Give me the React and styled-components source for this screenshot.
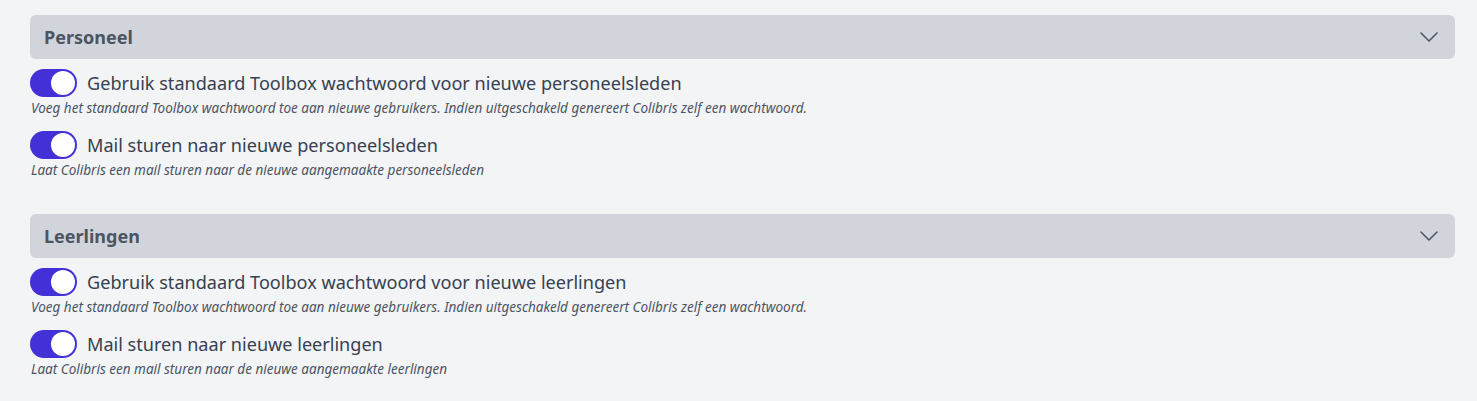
import React, { useState } from "react";
import styled, { createGlobalStyle } from "styled-components";

const Global = createGlobalStyle`
  html, body { margin: 0; padding: 0; background: #f3f4f6; }
  body { font-family: "Noto Sans", "Open Sans", sans-serif; }
  * { box-sizing: border-box; }
`;

const Page = styled.div`
  padding: 15px 22px 0 30px;
  display: flex;
  flex-direction: column;
  gap: 35px;
`;

const Section = styled.section`
  display: flex;
  flex-direction: column;
  gap: 10px;
`;

const Header = styled.button`
  all: unset;
  display: flex;
  align-items: center;
  justify-content: space-between;
  height: 44px;
  padding: 0 17px 0 14px;
  background: #d1d5db;
  border-radius: 6px;
  cursor: pointer;
`;

const Title = styled.h2`
  margin: 0;
  font-size: 18px;
  font-weight: 700;
  color: #4b5563;
  font-family: "Noto Sans", sans-serif;
`;

const Settings = styled.div`
  display: flex;
  flex-direction: column;
  gap: 14px;
`;

const Setting = styled.div`
  display: flex;
  flex-direction: column;
`;

const Row = styled.label`
  display: flex;
  align-items: center;
  gap: 10px;
  height: 28px;
  cursor: pointer;
`;

const Track = styled.span`
  position: relative;
  display: inline-block;
  width: 47px;
  height: 28px;
  border-radius: 14px;
  background: ${(p) => (p.$on ? "#4330d6" : "#9ca3af")};
  flex-shrink: 0;
`;

const Knob = styled.span`
  position: absolute;
  top: 2px;
  left: ${(p) => (p.$on ? "21px" : "2px")};
  width: 24px;
  height: 24px;
  border-radius: 50%;
  background: #ffffff;
  transition: left 0.15s;
`;

const Label = styled.span`
  font-size: 18.1px;
  color: #374151;
  line-height: 28px;
`;

const Description = styled.p`
  margin: 2px 0 0 1px;
  font-size: 13.5px;
  line-height: 18px;
  font-style: italic;
  color: #4b5563;
`;

const Chevron = () => (
  <svg width="18" height="10" viewBox="0 0 18 10" fill="none">
    <polyline points="1,1 9,9 17,1" stroke="#4b5563" strokeWidth="1.6" strokeLinecap="round" strokeLinejoin="round" />
  </svg>
);

const Toggle = ({ on, onClick }) => (
  <Track $on={on} onClick={onClick}>
    <Knob $on={on} />
  </Track>
);

const SettingItem = ({ label, description }) => {
  const [on, setOn] = useState(true);
  return (
    <Setting>
      <Row onClick={() => setOn(!on)}>
        <Toggle on={on} />
        <Label>{label}</Label>
      </Row>
      <Description>{description}</Description>
    </Setting>
  );
};

const sections = [
  {
    title: "Personeel",
    items: [
      {
        label: "Gebruik standaard Toolbox wachtwoord voor nieuwe personeelsleden",
        description:
          "Voeg het standaard Toolbox wachtwoord toe aan nieuwe gebruikers. Indien uitgeschakeld genereert Colibris zelf een wachtwoord.",
      },
      {
        label: "Mail sturen naar nieuwe personeelsleden",
        description: "Laat Colibris een mail sturen naar de nieuwe aangemaakte personeelsleden",
      },
    ],
  },
  {
    title: "Leerlingen",
    items: [
      {
        label: "Gebruik standaard Toolbox wachtwoord voor nieuwe leerlingen",
        description:
          "Voeg het standaard Toolbox wachtwoord toe aan nieuwe gebruikers. Indien uitgeschakeld genereert Colibris zelf een wachtwoord.",
      },
      {
        label: "Mail sturen naar nieuwe leerlingen",
        description: "Laat Colibris een mail sturen naar de nieuwe aangemaakte leerlingen",
      },
    ],
  },
];

export default function App() {
  return (
    <>
      <Global />
      <Page>
        {sections.map((s) => (
          <Section key={s.title}>
            <Header>
              <Title>{s.title}</Title>
              <Chevron />
            </Header>
            <Settings>
              {s.items.map((it) => (
                <SettingItem key={it.label} {...it} />
              ))}
            </Settings>
          </Section>
        ))}
      </Page>
    </>
  );
}
